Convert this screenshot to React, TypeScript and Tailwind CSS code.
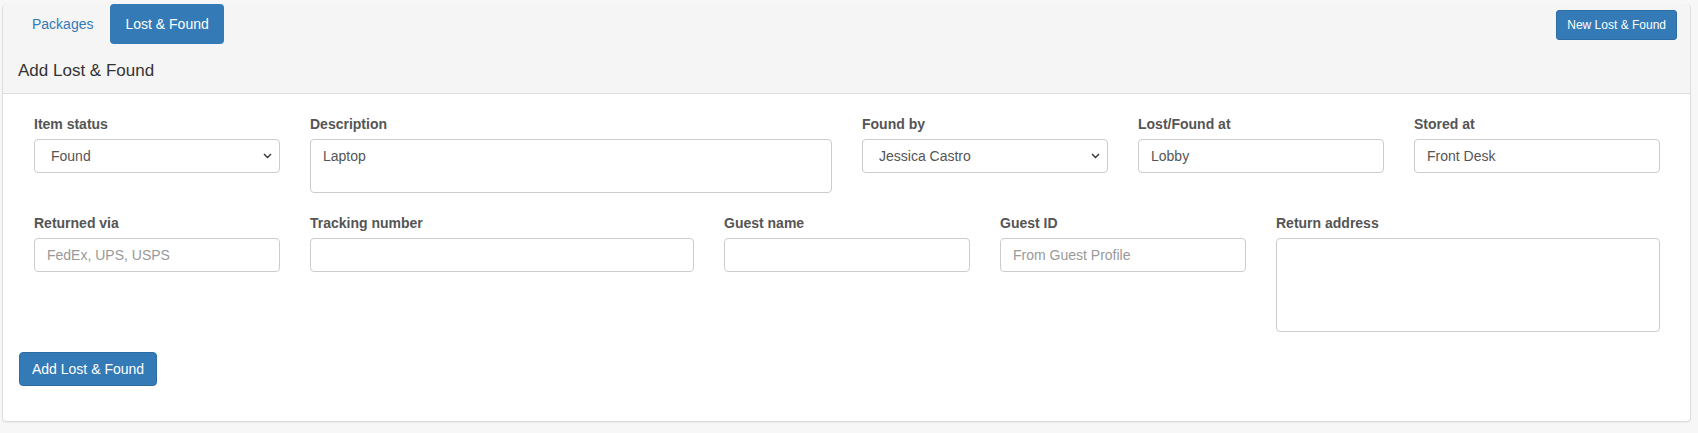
import React from "react";

type Field = {
  label: string;
  span: string;
  kind: "select" | "input" | "textarea";
  value?: string;
  placeholder?: string;
  rows?: number;
};

const firstRow: Field[] = [
  { label: "Item status", span: "col-span-2", kind: "select", value: "Found" },
  { label: "Description", span: "col-span-4", kind: "textarea", value: "Laptop", rows: 2 },
  { label: "Found by", span: "col-span-2", kind: "select", value: "Jessica Castro" },
  { label: "Lost/Found at", span: "col-span-2", kind: "input", value: "Lobby" },
  { label: "Stored at", span: "col-span-2", kind: "input", value: "Front Desk" },
];

const secondRow: Field[] = [
  { label: "Returned via", span: "col-span-2", kind: "input", placeholder: "FedEx, UPS, USPS" },
  { label: "Tracking number", span: "col-span-3", kind: "input" },
  { label: "Guest name", span: "col-span-2", kind: "input" },
  { label: "Guest ID", span: "col-span-2", kind: "input", placeholder: "From Guest Profile" },
  { label: "Return address", span: "col-span-3", kind: "textarea", rows: 4 },
];

const control =
  "block w-full border border-[#ccc] rounded-[4px] bg-white text-[14px] leading-[20px] text-[#555] placeholder:text-[#999] outline-none";

function Chevron() {
  return (
    <svg
      width="9"
      height="6"
      viewBox="0 0 9 6"
      className="absolute right-[8px] top-[14px] pointer-events-none"
    >
      <path d="M1 1l3.5 3.5L8 1" fill="none" stroke="#333" strokeWidth="1.4" />
    </svg>
  );
}

function FormField({ field }: { field: Field }) {
  return (
    <div className={`${field.span} px-[15px]`}>
      <label className="block mb-[5px] text-[14px] leading-[20px] font-bold text-[#555]">
        {field.label}
      </label>
      {field.kind === "select" && (
        <div className="relative">
          <select
            defaultValue={field.value}
            className={`${control} appearance-none h-[34px] pl-[16px] pr-[24px]`}
          >
            <option>{field.value}</option>
          </select>
          <Chevron />
        </div>
      )}
      {field.kind === "input" && (
        <input
          type="text"
          defaultValue={field.value}
          placeholder={field.placeholder}
          className={`${control} h-[34px] px-[12px] py-[6px]`}
        />
      )}
      {field.kind === "textarea" && (
        <textarea
          rows={field.rows}
          defaultValue={field.value}
          className={`${control} resize-none px-[12px] py-[6px]`}
        />
      )}
    </div>
  );
}

export default function App() {
  return (
    <div
      className="min-h-screen bg-[#f7f7f7] pt-[4px] pl-[2px] pr-[7px]"
      style={{ fontFamily: '"Liberation Sans", Arial, sans-serif' }}
    >
      <div className="bg-white border border-[#ddd] rounded-[4px] shadow-[0_1px_1px_rgba(0,0,0,0.05)]">
        {/* Panel heading: tabs, action button and title */}
        <div className="bg-[#f5f5f5] border-b border-[#ddd] rounded-t-[4px] pl-[14px] pr-[13px] pb-[12px]">
          <div className="flex items-start justify-between -mt-px">
            <nav className="flex">
              <a className="px-[15px] py-[10px] text-[14px] leading-[20px] text-[#337ab7] rounded-[4px]">
                Packages
              </a>
              <a className="ml-[2px] px-[15px] py-[10px] text-[14px] leading-[20px] text-white bg-[#337ab7] rounded-[4px]">
                Lost &amp; Found
              </a>
            </nav>
            <button className="mt-[6px] px-[10px] py-[5px] text-[12px] leading-[18px] text-white bg-[#337ab7] border border-[#2e6da4] rounded-[3px]">
              New Lost &amp; Found
            </button>
          </div>
          <h3 className="mt-[17px] pl-[1px] text-[17px] leading-[20px] text-[#333]">
            Add Lost &amp; Found
          </h3>
        </div>

        {/* Panel body: the form */}
        <div className="pl-[16px] pr-[15px] pt-[20px] pb-[35px]">
          <div className="grid grid-cols-12 items-start">
            {firstRow.map((f) => (
              <FormField key={f.label} field={f} />
            ))}
          </div>
          <div className="grid grid-cols-12 items-start mt-[20px]">
            {secondRow.map((f) => (
              <FormField key={f.label} field={f} />
            ))}
          </div>
          <button className="mt-[20px] px-[12px] py-[6px] text-[14px] leading-[20px] text-white bg-[#337ab7] border border-[#2e6da4] rounded-[4px]">
            Add Lost &amp; Found
          </button>
        </div>
      </div>
    </div>
  );
}
